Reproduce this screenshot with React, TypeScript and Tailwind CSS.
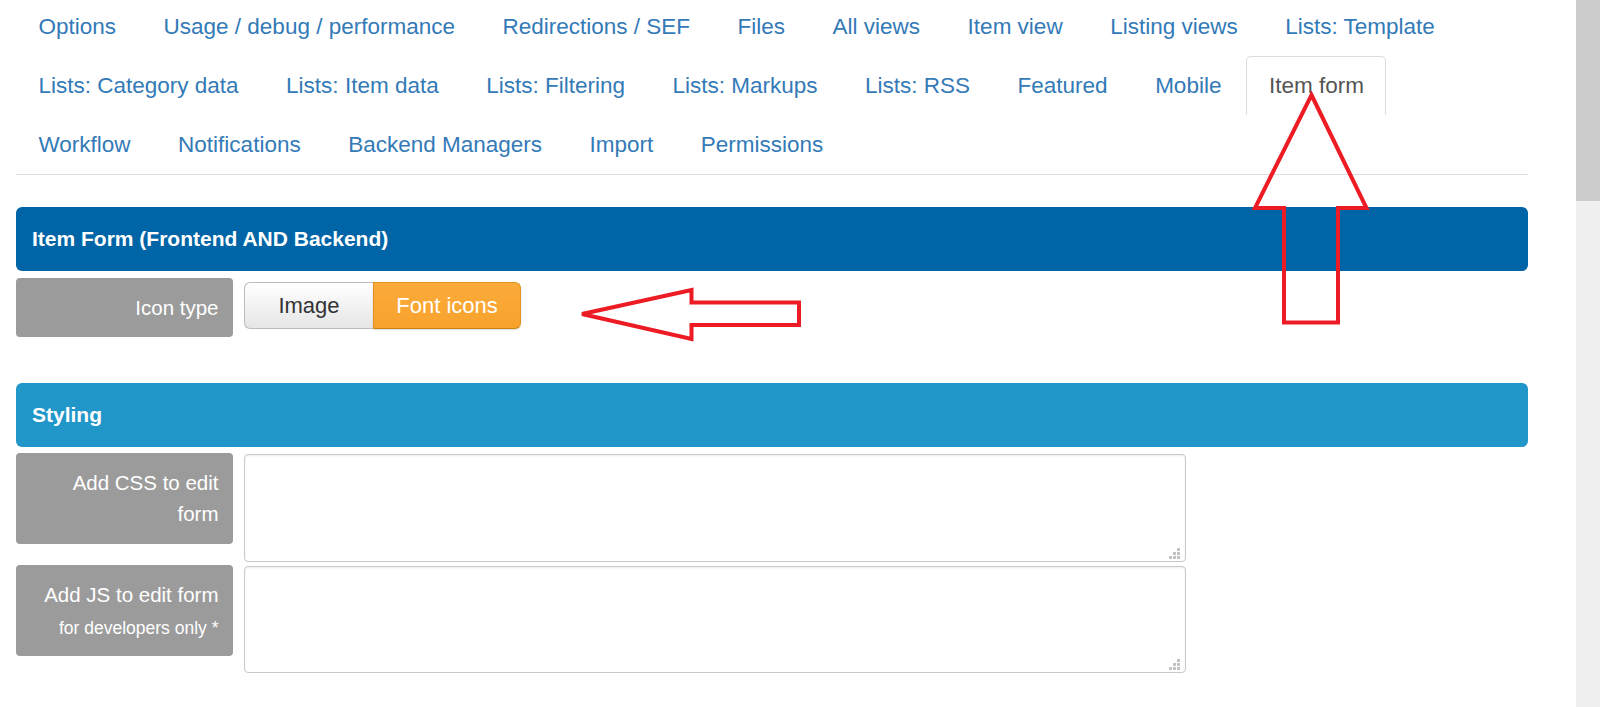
import type { ReactNode } from 'react'

const TAB_ROWS: string[][] = [
  ['Options', 'Usage / debug / performance', 'Redirections / SEF', 'Files', 'All views', 'Item view', 'Listing views', 'Lists: Template'],
  ['Lists: Category data', 'Lists: Item data', 'Lists: Filtering', 'Lists: Markups', 'Lists: RSS', 'Featured', 'Mobile', 'Item form'],
  ['Workflow', 'Notifications', 'Backend Managers', 'Import', 'Permissions'],
]

const ACTIVE_TAB = 'Item form'

function SectionBar({ title, color }: { title: string; color: string }) {
  return (
    <div className={`h-[64px] ${color} rounded-[6px] px-[16px] flex items-center text-white font-bold text-[21px]`}>
      {title}
    </div>
  )
}

function Label({ children, className = '' }: { children: ReactNode; className?: string }) {
  return (
    <div className={`w-[217px] shrink-0 bg-[#9b9b9b] rounded-[4px] text-white text-right text-[20.5px] leading-[31px] pl-[15px] pr-[14.5px] ${className}`}>
      {children}
    </div>
  )
}

function Grip() {
  return (
    <svg className="absolute right-[6px] bottom-[3px]" width="11" height="11" viewBox="0 0 11 11">
      <g fill="#c2c2c2">
        <rect x="8" y="0" width="3" height="3" />
        <rect x="4" y="4" width="3" height="3" />
        <rect x="8" y="4" width="3" height="3" />
        <rect x="0" y="8" width="3" height="3" />
        <rect x="4" y="8" width="3" height="3" />
        <rect x="8" y="8" width="3" height="3" />
      </g>
    </svg>
  )
}

function Editor({ height }: { height: string }) {
  return (
    <div className={`relative mt-[1px] w-[942px] ${height}`}>
      <textarea className="block w-full h-full resize-none border border-[#c9c9c9] rounded-[4px] bg-white shadow-[inset_0_1px_2px_rgba(0,0,0,0.07)] outline-none" />
      <Grip />
    </div>
  )
}

export default function App() {
  return (
    <div
      className="relative flex w-[1600px] h-[707px] overflow-hidden bg-white"
      style={{ fontFamily: '"Liberation Sans", Arial, sans-serif' }}
    >
      <div className="flex-1 pl-[16px] pr-[48px]">
        {/* Tabs */}
        <ul className="-mt-[3px] border-b border-[#ddd]">
          {TAB_ROWS.map((row, i) => (
            <li key={i} className="flex">
              {row.map((t) => {
                const active = t === ACTIVE_TAB
                return (
                  <span
                    key={t}
                    className={`h-[59px] mr-[2.5px] px-[21.5px] flex items-center whitespace-nowrap text-[22.5px] border ${
                      active
                        ? 'border-[#ddd] border-b-transparent rounded-t-[5px] text-[#555]'
                        : 'border-transparent text-[#337ab7]'
                    }`}
                  >
                    {t}
                  </span>
                )
              })}
            </li>
          ))}
        </ul>

        {/* Item form section */}
        <div className="mt-[32px]">
          <SectionBar title="Item Form (Frontend AND Backend)" color="bg-[#0065a6]" />
        </div>
        <div className="mt-[7px] flex items-start gap-[11px]">
          <Label className="h-[59px] flex items-center justify-end">Icon type</Label>
          <div className="mt-[4px] flex h-[47px] text-[22px]">
            <button className="w-[129px] border border-[#bcbcbc] border-r-0 rounded-l-[6px] bg-linear-to-b from-white to-[#e6e6e6] text-[#333]">
              Image
            </button>
            <button className="w-[148px] border border-[#e2931f] border-b-[#c98216] rounded-r-[6px] bg-linear-to-b from-[#fbab3a] to-[#f8a22d] text-white shadow-[0_1px_2px_rgba(0,0,0,0.15)]">
              Font icons
            </button>
          </div>
        </div>

        {/* Styling section */}
        <div className="mt-[46px]">
          <SectionBar title="Styling" color="bg-[#2196c9]" />
        </div>
        <div className="mt-[6px] flex items-start gap-[11px]">
          <Label className="h-[91px] pt-[14px]">Add CSS to edit form</Label>
          <Editor height="h-[108px]" />
        </div>
        <div className="mt-[3px] flex items-start gap-[11px]">
          <Label className="h-[91px] pt-[14px]">
            Add JS to edit form
            <span className="block pt-[3px] text-[17.5px]">for developers only *</span>
          </Label>
          <Editor height="h-[107px]" />
        </div>
      </div>

      {/* Scrollbar */}
      <div className="w-[24px] shrink-0 bg-[#f0f0f0]">
        <div className="h-[201px] bg-[#cbcbcb]" />
      </div>

      {/* Annotation arrows */}
      <svg className="absolute inset-0 pointer-events-none" width="1600" height="707" viewBox="0 0 1600 707">
        <polygon
          points="1311.5,95 1366.5,208 1338,208 1338,322.5 1284,322.5 1284,208 1255,208"
          fill="none"
          stroke="#ed1c24"
          strokeWidth="4"
        />
        <polygon
          points="582,314 691.5,290 691.5,302.5 799,302.5 799,325 691.5,325 691.5,339"
          fill="none"
          stroke="#ed1c24"
          strokeWidth="4"
        />
      </svg>
    </div>
  )
}
